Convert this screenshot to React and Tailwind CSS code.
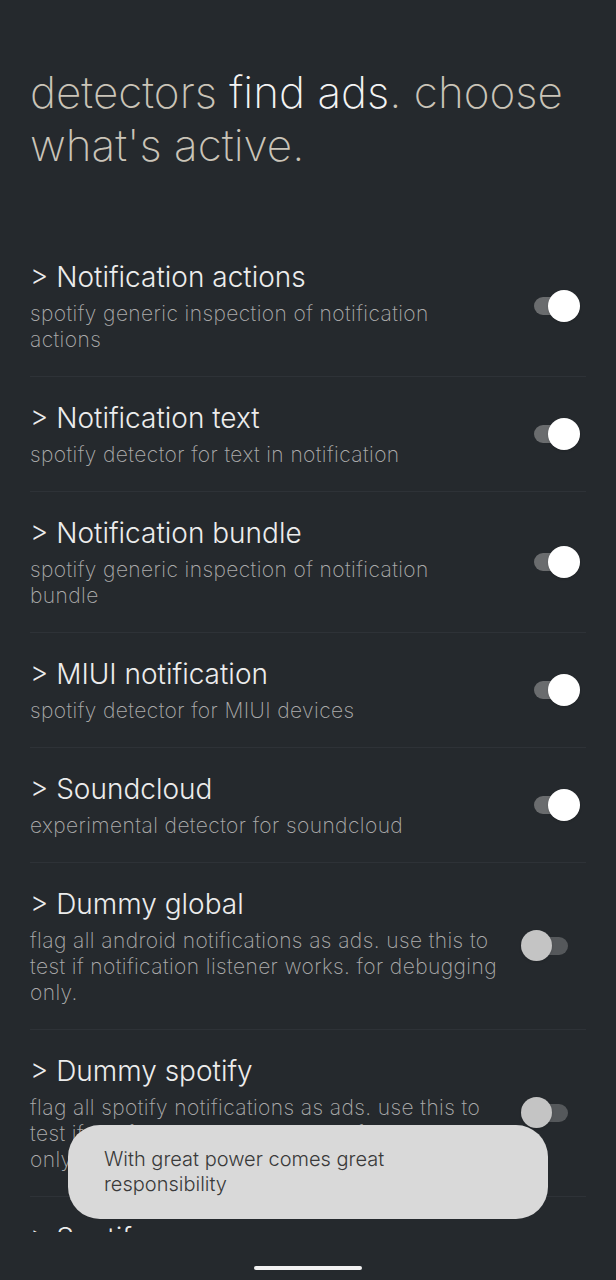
import React from 'react';

const detectors = [
  { title: 'Notification actions', lines: ['spotify generic inspection of notification', 'actions'], on: true },
  { title: 'Notification text', lines: ['spotify detector for text in notification'], on: true },
  { title: 'Notification bundle', lines: ['spotify generic inspection of notification', 'bundle'], on: true },
  { title: 'MIUI notification', lines: ['spotify detector for MIUI devices'], on: true },
  { title: 'Soundcloud', lines: ['experimental detector for soundcloud'], on: true },
  {
    title: 'Dummy global',
    lines: ['flag all android notifications as ads. use this to', 'test if notification listener works. for debugging', 'only.'],
    on: false,
  },
  {
    title: 'Dummy spotify',
    lines: ['flag all spotify notifications as ads. use this to', 'test if notification listener works. for debugging', 'only.'],
    on: false,
  },
  { title: 'Spotify ...', lines: ['...'], on: true },
];

const Toggle = ({ on }) =>
  on ? (
    <div className="relative w-[46px] h-[32px] mr-[6px] flex-shrink-0">
      <div className="absolute left-0 right-[3px] top-[7px] h-[18px] rounded-full bg-[#6a6c6e]" />
      <div className="absolute right-0 top-0 w-[32px] h-[32px] rounded-full bg-white shadow" />
    </div>
  ) : (
    <div className="relative w-[47px] h-[32px] mr-[18px] flex-shrink-0">
      <div className="absolute left-[4px] right-0 top-[7px] h-[18px] rounded-full bg-[#55585b]" />
      <div className="absolute left-0 top-0 w-[31px] h-[31px] rounded-full bg-[#c4c4c4] shadow" />
    </div>
  );

export default function App() {
  return (
    <div
      className="relative w-[616px] h-[1280px] bg-[#25292d] overflow-hidden flex flex-col"
      style={{ fontFamily: 'Inter, "Noto Sans", sans-serif' }}
    >
      <div className="h-[1232px] overflow-hidden flex-shrink-0">
        <h1 className="px-[30px] pt-[66px] text-[44px] leading-[53px] font-extralight text-[#cac4b8] tracking-[0px]">
          detectors <span className="text-[#f4f4f4]">find ads</span>. choose what's active.
        </h1>

        <div className="mt-[64px] px-[30px]">
          {detectors.map((d, i) => (
            <div key={i} className={`flex items-center ${i > 0 ? 'border-t border-[#2e3237]' : ''}`}>
              <div className="flex-1 pt-[23px] pb-[23px]">
                <div className="text-[28px] leading-[36px] font-light text-[#ececec]">&gt; {d.title}</div>
                <div className="mt-[6px] text-[21px] leading-[26px] font-extralight text-[#ababab] tracking-[0.4px]">
                  {d.lines.map((l, j) => (
                    <div key={j} className="whitespace-nowrap">{l}</div>
                  ))}
                </div>
              </div>
              <Toggle on={d.on} />
            </div>
          ))}
        </div>
      </div>

      <div className="flex-1 flex items-start justify-center pt-[34px]">
        <div className="w-[108px] h-[4px] rounded-full bg-[#f2f2f2]" />
      </div>

      <div className="absolute left-[68px] top-[1125px] w-[480px] h-[94px] rounded-[32px] bg-[#d9d9d9] px-[36px] pt-[22px]">
        <div className="text-[20px] leading-[25px] font-light text-[#3a3a3a]">
          With great power comes great
          <br />
          responsibility
        </div>
      </div>
    </div>
  );
}
